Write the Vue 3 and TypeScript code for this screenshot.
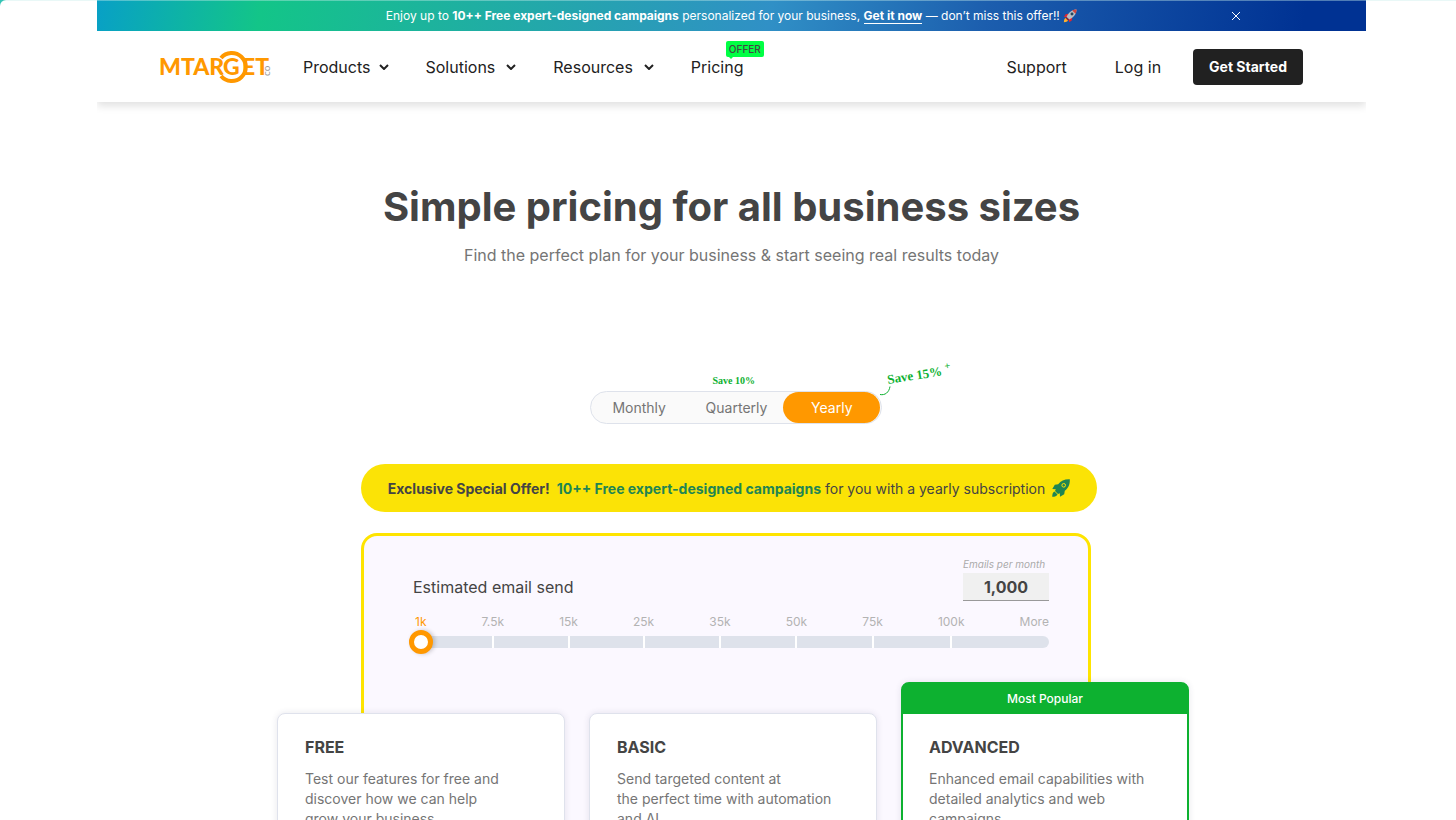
<script setup lang="ts">
import { computed, ref } from 'vue'

interface Plan {
  name: string
  lines: string[]
  popular?: boolean
}

const menus: string[] = ['Products', 'Solutions', 'Resources']
const periods: string[] = ['Monthly', 'Quarterly', 'Yearly']
const period = ref('Yearly')
const showBanner = ref(true)

const steps: string[] = ['1k', '7.5k', '15k', '25k', '35k', '50k', '75k', '100k', 'More']
const volumes: string[] = ['1,000', '7,500', '15,000', '25,000', '35,000', '50,000', '75,000', '100,000', '100,000+']
const step = ref(0)
const volume = computed(() => volumes[step.value])

const plans: Plan[] = [
  { name: 'FREE', lines: ['Test our features for free and', 'discover how we can help', 'grow your business.'] },
  { name: 'BASIC', lines: ['Send targeted content at', 'the perfect time with automation', 'and AI.'] },
  { name: 'ADVANCED', lines: ['Enhanced email capabilities with', 'detailed analytics and web', 'campaigns.'], popular: true },
]
</script>

<template>
  <div class="page">
    <div class="site">
      <div v-if="showBanner" class="banner">
        <p>
          Enjoy up to <b>10++ Free expert-designed campaigns</b> personalized for your business,
          <a href="#offer">Get it now</a> — don’t miss this offer!!
          <svg class="emoji" viewBox="0 0 16 16" aria-hidden="true">
            <path d="M1 15c0-3 1-5 3-5l2 2c0 2-2 3-5 3z" fill="#ffb02e" />
            <path d="M6 5.500 3 6 1 9l4 .5zM10.500 10 10 13l-3 2-.5-4z" fill="#e3242f" />
            <path d="M15.500.500C11 .500 7 3 4 9l3 3c6-3 8.500-7 8.500-11.500z" fill="#b9bec4" />
            <path d="M15.500.500c-2 0-3.500.300-5 1.200l3.800 3.800c.900-1.500 1.200-3 1.200-5z" fill="#d0453f" />
            <circle cx="10.300" cy="5.800" r="1.700" fill="#26465c" />
            <path d="m4 9 3 3-1.500 1L3 10.500z" fill="#8d2332" />
          </svg>
        </p>
        <button class="close" type="button" aria-label="Close" @click="showBanner = false">
          <svg viewBox="0 0 10 10"><path d="m1 1 8 8M9 1 1 9" /></svg>
        </button>
      </div>

      <header class="nav">
        <a class="logo" href="#home" aria-label="MTarget">
          <svg viewBox="0 0 112 34">
            <text class="word" x="-1" y="25">MTAR</text>
            <path class="gap" d="M61 8a14 14 0 1 1 0 18" />
            <text class="word" x="63" y="25">G</text>
            <text class="word" x="82" y="25">ET</text>
            <path d="M61 8a14 14 0 1 1 0 18" />
            <text class="co" x="-26" y="110" transform="rotate(-90)">co</text>
          </svg>
        </a>
        <nav class="menu" aria-label="Main">
          <button v-for="m in menus" :key="m" type="button">
            {{ m }}
            <svg viewBox="0 0 10 6" aria-hidden="true"><path d="m1 1 4 4 4-4" /></svg>
          </button>
          <a class="pricing" href="#pricing">Pricing<span class="tag">OFFER</span></a>
        </nav>
        <div class="account">
          <a href="#support">Support</a>
          <a href="#login">Log in</a>
          <button type="button">Get Started</button>
        </div>
      </header>

      <main>
        <h1>Simple pricing for all business sizes</h1>
        <p class="lead">Find the perfect plan for your business &amp; start seeing real results today</p>

        <div class="periods" role="group" aria-label="Billing period">
          <button
            v-for="p in periods"
            :key="p"
            type="button"
            :class="{ active: p === period }"
            :aria-pressed="p === period"
            @click="period = p"
          >{{ p }}</button>
          <span class="save10">Save 10%</span>
          <span class="save15">Save 15% <sup>+</sup></span>
          <svg class="curl" viewBox="0 0 12 10" aria-hidden="true"><path d="M1 8.500c5 1 9-2 10-8" /></svg>
        </div>

        <p class="offer">
          <b>Exclusive Special Offer!</b>
          <strong>10++ Free expert-designed campaigns</strong>
          <span>for you with a yearly subscription</span>
          <svg viewBox="0 0 18 18" aria-hidden="true">
            <path d="M17.800.200C12.500 0 9 1.600 6.200 5.200L2.800 5.800.300 10l3.500.200L3 12l3 3 1.800-.800.200 3.500 4.200-2.500.600-3.400C16.400 9 18 5.500 17.800.200z" />
            <path d="M2.500 12.500C.800 13.200.300 15 .200 17.800c2.800-.100 4.600-.600 5.300-2.300z" />
            <circle cx="11.700" cy="6.300" r="1.800" />
          </svg>
        </p>

        <div class="pricing-area">
          <section class="panel">
            <div class="estimate">
              <label for="volume">Estimated email send</label>
              <div class="amount">
                <label for="emails">Emails per month</label>
                <input id="emails" type="text" :value="volume" readonly />
              </div>
            </div>
            <div class="scale">
              <span v-for="(s, i) in steps" :key="s" :class="{ on: i === step }">{{ s }}</span>
            </div>
            <input id="volume" v-model.number="step" class="range" type="range" min="0" max="8" />
          </section>

          <div class="plans">
            <article v-for="plan in plans" :key="plan.name" class="plan" :class="{ popular: plan.popular }">
              <div v-if="plan.popular" class="ribbon">Most Popular</div>
              <div class="body">
                <h2>{{ plan.name }}</h2>
                <p><template v-for="(line, i) in plan.lines" :key="line"><br v-if="i" />{{ line }}</template></p>
              </div>
            </article>
          </div>
        </div>
      </main>
    </div>
  </div>
</template>

<style>
html {
  background: #35c4b5;
}
</style>

<style scoped>
* {
  box-sizing: border-box;
}
.page {
  position: relative;
  height: 100vh;
  overflow-y: auto;
  scrollbar-width: none;
  padding: 0 90px 0 97px;
  border-radius: 6px 0 0 0;
  background: #fff;
  color: #444;
  font-family: Inter, "Liberation Sans", sans-serif;
  font-size: 16px;
}
.page::before {
  content: '';
  position: absolute;
  z-index: 1;
  inset: 0 0 auto;
  height: 1px;
  background: rgba(200, 238, 235, 0.4);
}
h1, h2, p {
  margin: 0;
}
a {
  color: inherit;
  text-decoration: none;
}
button {
  border: 0;
  padding: 0;
  background: none;
  color: inherit;
  font: inherit;
  cursor: pointer;
}
svg {
  flex: none;
}
.banner {
  display: flex;
  align-items: center;
  justify-content: center;
  height: 31px;
  background: linear-gradient(100deg, #08a0c6 0%, #13c588 13%, #3090c6 53%, #1c5eae 70%, #003293 95%);
  color: #fff;
  font-size: 12px;
  position: relative;
}
.banner a {
  font-weight: 700;
  border-bottom: 1px solid #fff;
}
.emoji {
  width: 14px;
  height: 14px;
  vertical-align: -3px;
}
.close {
  position: absolute;
  right: 125px;
  width: 10px;
  height: 12px;
}
.close svg {
  display: block;
  width: 10px;
  fill: none;
  stroke: #fff;
}
.nav {
  display: flex;
  align-items: center;
  height: 71px;
  padding: 0 63px;
  box-shadow: 0 4px 8px rgba(0, 0, 0, 0.12);
  clip-path: inset(0 0 -16px 0);
  color: #212121;
}
.logo svg {
  display: block;
  width: 112px;
  height: 34px;
}
.word {
  fill: #ff9800;
  font: 900 23px Lato, sans-serif;
}
.logo path {
  fill: none;
  stroke: #ff9800;
  stroke-width: 4;
}
.logo .gap {
  stroke: #fff;
  stroke-width: 6;
}
.co {
  fill: #999;
  font: 10px Lato, sans-serif;
}
.menu {
  display: flex;
  align-items: center;
  gap: 37px;
  margin-left: 31px;
}
.menu button {
  display: flex;
  align-items: center;
  gap: 11px;
}
.menu button:first-child {
  gap: 8px;
}
.menu svg {
  width: 10px;
  height: 6px;
  fill: none;
  stroke: #212121;
  stroke-width: 2;
}
.pricing {
  position: relative;
}
.tag {
  position: absolute;
  left: 35px;
  bottom: 20px;
  padding: 0 3px;
  border-radius: 2px;
  background: #00ff44;
  color: #444;
  font-size: 10px;
  font-weight: 500;
  line-height: 16px;
}
.tag::after {
  content: '';
  position: absolute;
  left: 3px;
  top: 16px;
  border: 2px solid transparent;
  border-top-color: #00ff44;
}
.account {
  display: flex;
  align-items: center;
  gap: 48px;
  margin-left: auto;
}
.account button {
  height: 36px;
  padding: 0 16px;
  margin-left: -16px;
  border-radius: 4px;
  background: #212121;
  color: #fff;
  font-size: 14px;
  font-weight: 700;
}
main {
  display: flex;
  flex-direction: column;
  align-items: center;
  padding-top: 81px;
}
h1 {
  font-size: 40px;
  line-height: 48px;
  font-weight: 700;
}
.lead {
  margin-top: 12px;
  color: #757575;
  line-height: 24px;
}
.periods {
  position: relative;
  display: flex;
  left: 4px;
  margin-top: 124px;
  width: 292px;
  height: 33px;
  border: 1px solid #dee2eb;
  border-radius: 17px;
  background: #fafafa;
  color: #757575;
  font-size: 14px;
}
.periods button {
  flex: 1;
  border-radius: 16px;
}
.periods .active {
  margin-left: -2px;
  background: #ff9800;
  color: #fff;
}
.save10, .save15 {
  position: absolute;
  color: #0db130;
  font-family: "Liberation Serif", serif;
  font-weight: 700;
  white-space: nowrap;
}
.save10 {
  left: 122px;
  top: -17px;
  font-size: 10px;
}
.save15 {
  left: 296px;
  top: -25px;
  font-size: 13px;
  transform: rotate(-9deg);
}
.save15 sup {
  font-size: 10px;
  line-height: 0;
}
.curl {
  position: absolute;
  left: 288px;
  top: -6px;
  width: 12px;
  height: 10px;
  fill: none;
  stroke: #0db130;
}
.offer {
  display: flex;
  align-items: center;
  justify-content: center;
  width: 736px;
  max-width: 100%;
  height: 48px;
  margin: 40px 5px 0 0;
  border-radius: 24px;
  background: #fbe306;
  font-size: 14px;
}
.offer strong {
  margin: 0 4px 0 7px;
  color: #1f8552;
}
.offer svg {
  width: 18px;
  height: 18px;
  margin-left: 7px;
  fill: #1f8552;
}
.offer circle {
  stroke: #fbe306;
}
.pricing-area {
  display: grid;
  justify-items: center;
  width: 100%;
  margin-top: 21px;
}
.panel, .plans {
  grid-area: 1 / 1;
}
.panel {
  width: 730px;
  max-width: 100%;
  margin-right: 11px;
  padding: 20px 39px 0 45px;
  border: 3px solid #fee400;
  border-radius: 16px;
  background: #fbf8ff;
}
.estimate {
  display: flex;
  align-items: flex-end;
  justify-content: space-between;
  padding-left: 4px;
  line-height: 28px;
}
.amount {
  display: flex;
  flex-direction: column;
  width: 86px;
}
.amount label {
  color: #aaa;
  font-size: 10px;
  font-style: italic;
  line-height: 17px;
  white-space: nowrap;
}
.amount input {
  width: 100%;
  height: 28px;
  padding: 0;
  border: 0;
  border-bottom: 1px solid #999;
  border-radius: 0;
  background: #f0f0f0;
  color: #444;
  font: 700 16px Inter, sans-serif;
  text-align: center;
}
.scale {
  display: flex;
  justify-content: space-between;
  margin-top: 12px;
  padding-left: 6px;
  color: #b3b3b3;
  font-size: 12px;
  line-height: 17px;
}
.scale span {
  position: relative;
}
.scale span:not(:first-child, :last-child)::after {
  content: '';
  position: absolute;
  left: calc(50% - 1px);
  top: 23px;
  width: 2px;
  height: 12px;
  background: #fff;
}
.scale .on {
  color: #ff9800;
}
.range {
  display: block;
  width: 100%;
  height: 24px;
  margin: 0;
  appearance: none;
  background: none;
}
.range::-webkit-slider-runnable-track {
  height: 12px;
  border-radius: 6px;
  background: #dee2eb;
}
.range::-webkit-slider-thumb {
  appearance: none;
  width: 24px;
  height: 24px;
  margin-top: -6px;
  border: 5px solid #ff9800;
  border-radius: 50%;
  background: #fff;
  box-shadow: 2px 0 4px rgba(0, 0, 0, 0.2);
}
.plans {
  display: grid;
  grid-template-columns: repeat(3, 288px);
  align-items: end;
  gap: 24px;
  margin: 149px 0 0 3px;
}
.plan {
  overflow: hidden;
  border: 1px solid #dfe2ec;
  border-radius: 8px;
  background: #fff;
  box-shadow: 0 0 6px rgba(60, 60, 100, 0.12);
}
.popular {
  border-color: #0db130;
  border-width: 1px 2px;
  background: linear-gradient(#0db130 31px, #fff 31px);
}
.ribbon {
  height: 31px;
  color: #fff;
  font-size: 12px;
  font-weight: 500;
  line-height: 31px;
  text-align: center;
}
.body {
  height: 280px;
  padding: 20px 27px;
}
.popular .body {
  padding: 20px 26px;
}
h2 {
  font-size: 16px;
  line-height: 26px;
}
.plan p {
  margin-top: 9px;
  color: #757575;
  font-size: 14px;
  line-height: 20px;
}
</style>
